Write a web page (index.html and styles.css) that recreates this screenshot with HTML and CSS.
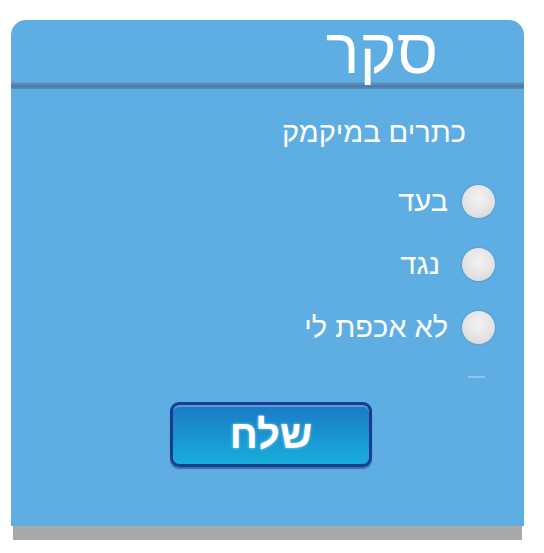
FILE: index.html
```html
<!DOCTYPE html>
<html lang="he" dir="rtl">
<head>
    <meta charset="UTF-8">
    <meta name="viewport" content="width=device-width, initial-scale=1.0">
    <title>סקר</title>
    <link rel="stylesheet" href="styles.css">
</head>
<body>
    <div class="page">
        <!-- Poll box -->
        <div class="poll">
            <div class="poll-header">
                <h1>סקר</h1>
            </div>
            <div class="poll-line"></div>

            <form class="poll-body" id="poll-form">
                <p class="question">כתרים במיקמק</p>

                <label class="option">
                    <input type="radio" name="vote" value="for">
                    <span class="dot"></span>
                    <span class="label-text">בעד</span>
                </label>
                <label class="option">
                    <input type="radio" name="vote" value="against">
                    <span class="dot"></span>
                    <span class="label-text">&nbsp;נגד</span>
                </label>
                <label class="option">
                    <input type="radio" name="vote" value="none">
                    <span class="dot"></span>
                    <span class="label-text">לא אכפת לי</span>
                </label>
                <div class="option-peek"></div>

                <button type="submit" class="send-btn">שלח</button>
            </form>
        </div>
        <div class="poll-shadow"></div>
    </div>
</body>
</html>
```

FILE: styles.css
```css
body {
    margin: 0;
    background-color: #ffffff;
    font-family: "Liberation Sans", Arial, sans-serif;
}

.page {
    padding: 20px 20px 0 11px;
}

.poll {
    background-color: #5eade3;
    border-radius: 15px 15px 0 0;
    color: #ffffff;
}

.poll-header {
    height: 62px;
    display: flex;
    align-items: center;
    padding-right: 86px;
}

.poll-header h1 {
    margin: 0;
    font-size: 63px;
    font-weight: normal;
    line-height: 62px;
}

.poll-line {
    height: 7px;
    background: linear-gradient(#6b9ec6, #4779a3 60%, #5a8fba);
}

.poll-body {
    display: flex;
    flex-direction: column;
    padding: 28px 0 59px 0;
}

.question {
    margin: 0 0 22px 0;
    padding-right: 58px;
    font-size: 29px;
    line-height: 31px;
}

.option {
    height: 63px;
    display: flex;
    align-items: center;
    gap: 14px;
    padding-right: 29px;
    font-size: 29px;
    cursor: pointer;
}

.option input {
    display: none;
}

.dot {
    width: 33px;
    height: 33px;
    border-radius: 50%;
    background: radial-gradient(circle at 50% 40%, #f3f3f3, #e2e2e2 60%, #cfcfcf);
    box-shadow: 0 0 2px rgba(60, 90, 120, 0.5);
}

.option input:checked + .dot {
    background: radial-gradient(circle, #2a6fb0 30%, #e2e2e2 35%, #cfcfcf);
}

.option-peek {
    height: 2px;
    width: 17px;
    margin: 17px 39px 0 0;
    background: rgba(230, 240, 248, 0.35);
}

.send-btn {
    align-self: center;
    margin: 24px 0 0 7px;
    width: 202px;
    height: 65px;
    border: 3px solid #1b3c8e;
    border-radius: 9px;
    background: linear-gradient(#1b79c5, #18aedb);
    box-shadow: inset 0 2px 0 rgba(255, 255, 255, 0.25), 0 2px 1px rgba(20, 50, 110, 0.5);
    color: #ffffff;
    font-family: "Liberation Sans", Arial, sans-serif;
    font-size: 40px;
    font-weight: bold;
    text-shadow: 0 0 3px rgba(255, 255, 255, 0.6);
    cursor: pointer;
}

.send-btn:hover {
    background: linear-gradient(#2186d4, #1cb3e2);
}

.poll-shadow {
    height: 14px;
    margin: 0 2px 0 2px;
    background-color: #a8a8a8;
}
```
